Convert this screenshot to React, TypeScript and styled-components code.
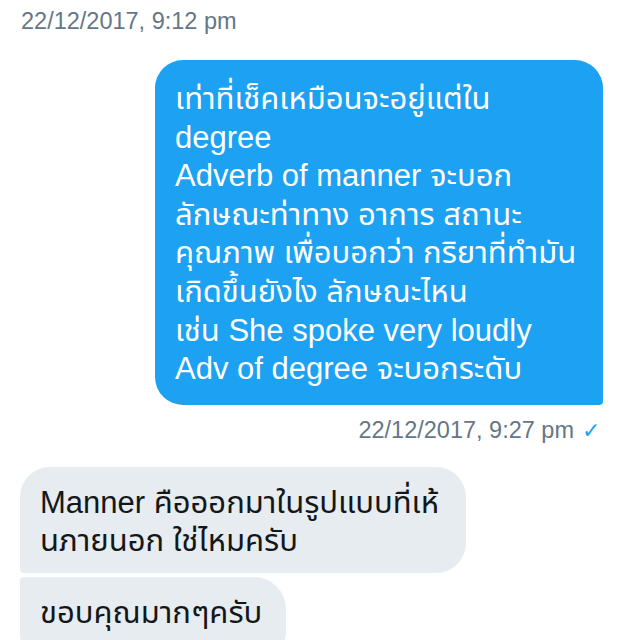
import React from 'react';
import styled, { createGlobalStyle } from 'styled-components';

const GlobalStyle = createGlobalStyle`
  html, body {
    margin: 0;
    padding: 0;
    background: #ffffff;
  }
  body {
    font-family: "Liberation Sans", "Noto Sans", "Noto Sans Thai", "Loma", "Garuda", sans-serif;
    -webkit-font-smoothing: antialiased;
  }
`;

const Thread = styled.div`
  width: 640px;
  height: 640px;
  overflow: hidden;
  display: flex;
  flex-direction: column;
`;

const Stamp = styled.div<{ $align?: 'left' | 'right' }>`
  font-size: 23.5px;
  color: #657786;
  line-height: 28px;
  text-align: ${(p) => (p.$align === 'right' ? 'right' : 'left')};
  padding: ${(p) => (p.$align === 'right' ? '11px 40px 0 0' : '7px 0 0 21px')};
`;

const Check = styled.span`
  color: #1da1f2;
  margin-left: 8px;
  font-size: 22px;
`;

const Row = styled.div<{ $out?: boolean; $gap?: number }>`
  display: flex;
  justify-content: ${(p) => (p.$out ? 'flex-end' : 'flex-start')};
  padding: 0 ${(p) => (p.$out ? '37px' : '0')} 0 ${(p) => (p.$out ? '0' : '20px')};
  margin-top: ${(p) => p.$gap ?? 0}px;
`;

const Bubble = styled.div<{ $out?: boolean; $width: number; $radius: string; $tail?: number }>`
  box-sizing: border-box;
  width: ${(p) => p.$width}px;
  background: ${(p) => (p.$out ? '#1da1f2' : '#e6ecf0')};
  color: ${(p) => (p.$out ? '#ffffff' : '#14171a')};
  border-radius: ${(p) => p.$radius};
  font-size: 31px;
  line-height: 38.6px;
  white-space: pre-line;
  padding: ${(p) => (p.$out ? '20px 18px 16px 20px' : `17px 16px ${p.$tail ?? 12}px 20px`)};
`;

const outText = `เท่าที่เช็คเหมือนจะอยู่แต่ใน
degree
Adverb of manner จะบอก
ลักษณะท่าทาง อาการ สถานะ
คุณภาพ เพื่อบอกว่า กริยาที่ทำมัน
เกิดขึ้นยังไง ลักษณะไหน
เช่น She spoke very loudly
Adv of degree จะบอกระดับ`;

const App: React.FC = () => {
  return (
    <>
      <GlobalStyle />
      <Thread>
        <Stamp>22/12/2017, 9:12 pm</Stamp>
        <Row $out $gap={25}>
          <Bubble $out $width={448} $radius="28px 28px 4px 28px">
            {outText}
          </Bubble>
        </Row>
        <Stamp $align="right">
          22/12/2017, 9:27 pm<Check>✓</Check>
        </Stamp>
        <Row $gap={22}>
          <Bubble $width={446} $radius="30px 30px 30px 4px">
            {`Manner คือออกมาในรูปแบบที่เห้\nนภายนอก ใช่ไหมครับ`}
          </Bubble>
        </Row>
        <Row $gap={4}>
          <Bubble $width={266} $radius="4px 32px 32px 30px" $tail={30}>
            {'ขอบคุณมากๆครับ'}
          </Bubble>
        </Row>
      </Thread>
    </>
  );
};

export default App;
